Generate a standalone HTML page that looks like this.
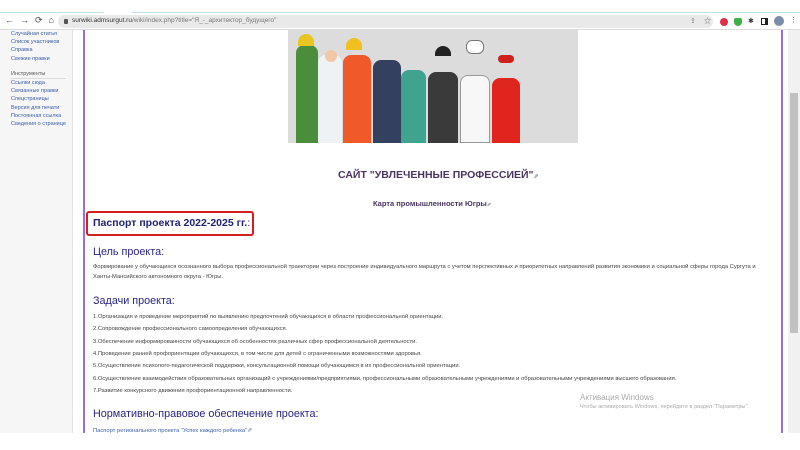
<!DOCTYPE html>
<html><head><meta charset="utf-8"><style>
*{margin:0;padding:0;box-sizing:border-box}
body{width:800px;height:450px;overflow:hidden;background:#fff;font-family:"Liberation Sans","Noto Sans CJK SC",sans-serif;position:relative}
.abs{position:absolute}
.side{position:absolute;left:11px;font-size:5.5px;line-height:8.2px;white-space:nowrap}
.side a{display:block;color:#3a5fa8}
.h2{position:absolute;left:93px;font-size:10.8px;color:#2a2580;white-space:nowrap}
.p{position:absolute;left:93px;font-size:5.8px;color:#444;white-space:nowrap}
.ic{position:absolute;top:18px;width:8px;height:8px;border-radius:50%}
</style></head><body>
<div class="abs" style="left:0;top:12px;width:800px;height:1px;background:#bfe0ea"></div>
<div class="abs" style="left:104px;top:10px;width:28px;height:3px;background:#fff"></div>
<div class="abs" style="left:0;top:29px;width:800px;height:1px;background:#ddd"></div>
<div class="abs" style="left:5px;top:15px;font-size:9px;color:#444;letter-spacing:6px;white-space:nowrap">←→⟳⌂</div>
<div class="abs" style="left:58px;top:15px;width:655px;height:13px;border-radius:7px;background:#e9e9ea"></div>
<div class="abs" style="left:64px;top:18.5px;width:4px;height:5px;background:#555;border-radius:1px"></div>
<div class="abs" style="left:72px;top:17px;font-size:6.5px;color:#333;white-space:nowrap">surwiki.admsurgut.ru<span style="color:#777">/wiki/index.php?title="Я_-_архитектор_будущего"</span></div>
<div class="abs" style="left:690px;top:17px;font-size:7px;color:#777">⇪</div>
<div class="abs" style="left:704px;top:16px;font-size:7px;color:#555">☆</div>
<div class="ic" style="left:720px;background:#e0304a"></div>
<div class="ic" style="left:734px;background:#3cb04a;border-radius:2px 2px 50% 50%"></div>
<div class="abs" style="left:748px;top:17px;font-size:7px;color:#333">✱</div>
<div class="abs" style="left:761px;top:18px;width:7px;height:7px;border:1.5px solid #222;border-right-width:3px"></div>
<div class="ic" style="left:774px;top:16px;width:10px;height:10px;background:#7a8ea8"></div>
<div class="abs" style="left:790px;top:16px;font-size:7px;color:#555">⋮</div>

<div class="abs" style="left:0;top:30px;width:73px;height:420px;background:#f6f6f6;border-right:1px solid #e4e4e4"></div>
<div class="side" style="top:30px"><a>Случайная статья</a><a>Список участников</a><a>Справка</a><a>Свежие правки</a></div>
<div class="side" style="top:70px;color:#555">Инструменты</div>
<div class="abs" style="left:11px;top:78px;width:55px;height:1px;background:#ddd"></div>
<div class="side" style="top:79px"><a>Ссылки сюда</a><a>Связанные правки</a><a>Спецстраницы</a><a>Версия для печати</a><a>Постоянная ссылка</a><a>Сведения о странице</a></div>

<div class="abs" style="left:83px;top:30px;width:2px;height:403px;background:#9a70d0"></div>
<div class="abs" style="left:781px;top:30px;width:2px;height:403px;background:#9a70d0"></div>
<div class="abs" style="left:788px;top:30px;width:12px;height:403px;background:#f1f1f1"></div>
<div class="abs" style="left:790px;top:93px;width:8px;height:240px;background:#c1c1c1"></div>

<div class="abs" style="left:288px;top:30px;width:290px;height:113px;background:#dcdcdc;overflow:hidden">
 <div class="abs" style="left:8px;top:15px;width:22px;height:98px;background:#4a8d3a;border-radius:8px 8px 0 0"></div>
 <div class="abs" style="left:10px;top:4px;width:16px;height:12px;background:#e8c520;border-radius:8px 8px 0 0"></div>
 <div class="abs" style="left:30px;top:25px;width:24px;height:88px;background:#eef2f4;border-radius:8px 8px 0 0"></div>
 <div class="abs" style="left:37px;top:20px;width:12px;height:12px;background:#f0c8a8;border-radius:50%"></div>
 <div class="abs" style="left:55px;top:25px;width:28px;height:88px;background:#f05a28;border-radius:8px 8px 0 0"></div>
 <div class="abs" style="left:58px;top:8px;width:16px;height:12px;background:#f0c020;border-radius:8px 8px 0 0"></div>
 <div class="abs" style="left:85px;top:30px;width:28px;height:83px;background:#34405f;border-radius:8px 8px 0 0"></div>
 <div class="abs" style="left:113px;top:40px;width:25px;height:73px;background:#3fa38e;border-radius:8px 8px 0 0"></div>
 <div class="abs" style="left:140px;top:42px;width:30px;height:71px;background:#3a3a3a;border-radius:8px 8px 0 0"></div>
 <div class="abs" style="left:147px;top:16px;width:16px;height:10px;background:#222;border-radius:8px 8px 0 0"></div>
 <div class="abs" style="left:172px;top:45px;width:30px;height:68px;background:#f7f7f7;border-radius:8px 8px 0 0;border:1px solid #999"></div>
 <div class="abs" style="left:178px;top:10px;width:18px;height:14px;background:#fff;border:1px solid #777;border-radius:6px"></div>
 <div class="abs" style="left:204px;top:48px;width:28px;height:65px;background:#e0241e;border-radius:8px 8px 0 0"></div>
 <div class="abs" style="left:210px;top:25px;width:16px;height:8px;background:#d0201c;border-radius:4px"></div>
</div>

<div class="abs" style="left:338px;top:169px;font-size:10.5px;font-weight:bold;color:#4a3560;white-space:nowrap">САЙТ "УВЛЕЧЕННЫЕ ПРОФЕССИЕЙ"<span style="font-size:6px;color:#88a">⇗</span></div>
<div class="abs" style="left:373px;top:199px;font-size:7.5px;font-weight:bold;color:#4a3560;white-space:nowrap">Карта промышленности Югры<span style="font-size:5px;color:#88a">⇗</span></div>
<div class="abs" style="left:86px;top:211px;width:168px;height:25px;border:2px solid #d21f1f;border-radius:3px"></div>
<div class="abs" style="left:93px;top:217px;font-size:10.5px;font-weight:bold;color:#1f1f70;white-space:nowrap">Паспорт проекта 2022-2025 гг.<span style="font-weight:normal">:</span></div>

<div class="h2" style="top:246px">Цель проекта:</div>
<div class="p" style="top:264px">Формирование у обучающихся осознанного выбора профессиональной траектории через построение индивидуального маршрута с учетом перспективных и приоритетных направлений развития экономики и социальной сферы города Сургута и</div>
<div class="p" style="top:274px">Ханты-Мансийского автономного округа - Югры.</div>

<div class="h2" style="top:295px">Задачи проекта:</div>
<div class="p" style="top:314px">1.Организация и проведение мероприятий по выявлению предпочтений обучающихся в области профессиональной ориентации.</div>
<div class="p" style="top:326px">2.Сопровождение профессионального самоопределения обучающихся.</div>
<div class="p" style="top:339px">3.Обеспечение информированности обучающихся об особенностях различных сфер профессиональной деятельности.</div>
<div class="p" style="top:351px">4.Проведение ранней профориентации обучающихся, в том числе для детей с ограниченными возможностями здоровья.</div>
<div class="p" style="top:363px">5.Осуществление психолого-педагогической поддержки, консультационной помощи обучающимся в их профессиональной ориентации.</div>
<div class="p" style="top:376px">6.Осуществление взаимодействия образовательных организаций с учреждениями/предприятиями, профессиональными образовательными учреждениями и образовательными учреждениями высшего образования.</div>
<div class="p" style="top:388px">7.Развитие конкурсного движения профориентационной направленности.</div>

<div class="abs" style="left:580px;top:393px;font-size:8px;color:#aaa;white-space:nowrap">Активация Windows</div>
<div class="abs" style="left:580px;top:404px;font-size:5.6px;color:#aaa;white-space:nowrap">Чтобы активировать Windows, перейдите в раздел "Параметры".</div>

<div class="h2" style="top:408px">Нормативно-правовое обеспечение проекта:</div>
<div class="p" style="top:428px;color:#3a5fa8">Паспорт регионального проекта "Успех каждого ребенка"⇗</div>
<div class="abs" style="left:0;top:433px;width:800px;height:17px;background:#fff"></div>
</body></html>
